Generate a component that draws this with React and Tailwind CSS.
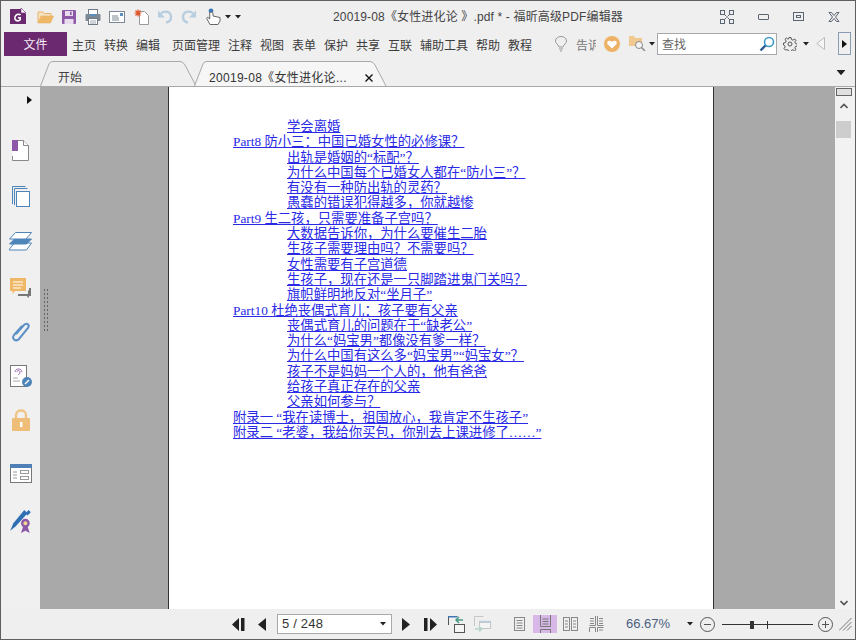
import React from "react";

const FONT = "font-['Liberation_Sans','Noto_Sans_CJK_SC',sans-serif]";

const Caret = ({ className = "" }) => (
  <svg width="6" height="4" viewBox="0 0 6 4" className={className}><path d="M0 0h6L3 3.5z" fill="#222" /></svg>
);

const Logo = () => (
  <svg width="17" height="17" viewBox="0 0 17 17" className="ml-[9px]">
    <path d="M0 1h11l5 5v10H0z" fill="#6b2a70" />
    <path d="M11 0l5 5h-5z" fill="#fff" stroke="#6b2a70" strokeWidth=".6" />
    <path d="M10.5 7.2C9.8 6 7.4 6 6 7.3c-1.5 1.5-1.5 4 0 5 1.3.8 3.2.5 4.2-.5V9.8H8" fill="none" stroke="#fff" strokeWidth="1.6" />
  </svg>
);
const Folder = () => (
  <svg width="17" height="14" viewBox="0 0 17 14" className="ml-[10px]">
    <path d="M1 13V2h5l1.5 1.5H14V6" fill="#f6e2c0" stroke="#e6b268" />
    <path d="M1 13L4 6h12.5L13.5 13z" fill="#efb866" stroke="#e6b268" strokeWidth=".6" />
  </svg>
);
const Save = () => (
  <svg width="14" height="14" viewBox="0 0 14 14" className="ml-[8px]">
    <rect width="14" height="14" rx="1" fill="#8e58a8" />
    <rect x="3" y="1" width="8" height="5" fill="#e9dcef" />
    <rect x="8" y="1.6" width="1.6" height="3.4" fill="#8e58a8" />
    <rect x="2.5" y="9" width="9" height="5" fill="#e9dcef" />
  </svg>
);
const Print = () => (
  <svg width="16" height="16" viewBox="0 0 16 16" className="ml-[9px]">
    <rect x="3.5" y=".5" width="9" height="5" fill="#fff" stroke="#6f7a86" />
    <rect x=".5" y="5" width="15" height="7" rx="1" fill="#7c8894" />
    <rect x="5" y="5" width="6" height="1.5" fill="#4f90c8" />
    <rect x="3.5" y="9.5" width="9" height="6" fill="#fff" stroke="#6f7a86" />
    <path d="M5 12h6M5 14h6" stroke="#a0a8b0" />
  </svg>
);
const Mail = () => (
  <svg width="16" height="12" viewBox="0 0 16 12" className="ml-[8px]">
    <rect x=".5" y=".5" width="15" height="11" fill="#fff" stroke="#7b8794" />
    <path d="M3 5h6M3 7h7M3 9h7" stroke="#7b8794" />
    <rect x="11" y="2" width="3" height="3" fill="#5a90c0" />
  </svg>
);
const StarDoc = () => (
  <svg width="15" height="16" viewBox="0 0 15 16" className="ml-[9px]">
    <path d="M5.5 2.5h5l4 4v9h-9z" fill="#fff" stroke="#9a9a9a" />
    <path d="M4 .5v7M.5 4h7M1.5 1.5l5 5M6.5 1.5l-5 5" stroke="#e0542a" strokeWidth="1.2" />
  </svg>
);
const Undo = ({ flip, className = "" }) => (
  <svg width="16" height="15" viewBox="0 0 16 15" className={flip ? `${className} -scale-x-100` : className}>
    <path d="M4 4.5C7 1.5 14 2 14 8c0 3-2 5-5 5.5" fill="none" stroke="#b7cde0" strokeWidth="2.4" />
    <path d="M1 1.5v7h7z" fill="#b7cde0" />
  </svg>
);
const Hand = () => (
  <svg width="15" height="18" viewBox="0 0 15 18" className="ml-[9px]">
    <circle cx="5" cy="3" r="2.4" fill="#3f78b8" />
    <path d="M3.7 5v6L2 9.5C1 9 .4 10 1 11l3 5.5h8l2-3.5V9.5L7 8V5C7 4 3.7 4 3.7 5z" fill="#fff" stroke="#666" />
  </svg>
);
const Tile = () => (
  <svg width="14" height="14" viewBox="0 0 14 14" fill="none" stroke="#5a6472">
    <rect x=".5" y=".5" width="4" height="4" /><rect x="9.5" y=".5" width="4" height="4" />
    <rect x=".5" y="9.5" width="4" height="4" /><rect x="9.5" y="9.5" width="4" height="4" />
    <path d="M5 5l1.5 1.5M9 5L7.5 6.5M5 9l1.5-1.5M9 9L7.5 7.5" />
  </svg>
);

const menus = [
  ["主页", "w-[24px]"], ["转换", "w-[24px]"], ["编辑", "w-[28px]"], ["页面管理", "w-[48px]"],
  ["注释", "w-[24px]"], ["视图", "w-[24px]"], ["表单", "w-[24px]"], ["保护", "w-[24px]"],
  ["共享", "w-[24px]"], ["互联", "w-[24px]"], ["辅助工具", "w-[48px]"], ["帮助", "w-[24px]"], ["教程", "w-[24px]"],
];

const TabShape = ({ width, fill }) => (
  <svg width={width} height="25" viewBox={`0 0 ${width} 25`} className="absolute left-0 top-0" fill="none">
    <path d={`M.5 25L9 3Q10 .5 13 .5H${width - 17}Q${width - 14} .5 ${width - 12} 4L${width - 1} 25`} fill={fill} stroke="#a8a8a8" />
  </svg>
);

const lines = [
  [1, "学会离婚"],
  [0, "Part8 防小三：中国已婚女性的必修课？"],
  [1, "出轨是婚姻的“标配”？"],
  [1, "为什么中国每个已婚女人都在“防小三”？"],
  [1, "有没有一种防出轨的灵药？"],
  [1, "愚蠢的错误犯得越多，你就越惨"],
  [0, "Part9 生二孩，只需要准备子宫吗？"],
  [1, "大数据告诉你，为什么要催生二胎"],
  [1, "生孩子需要理由吗？不需要吗？"],
  [1, "女性需要有子宫道德"],
  [1, "生孩子，现在还是一只脚踏进鬼门关吗？"],
  [1, "旗帜鲜明地反对“坐月子”"],
  [0, "Part10 杜绝丧偶式育儿：孩子要有父亲"],
  [1, "丧偶式育儿的问题在于“缺老公”"],
  [1, "为什么“妈宝男”都像没有爹一样？"],
  [1, "为什么中国有这么多“妈宝男”“妈宝女”？"],
  [1, "孩子不是妈妈一个人的，他有爸爸"],
  [1, "给孩子真正存在的父亲"],
  [1, "父亲如何参与？"],
  [0, "附录一 “我在读博士，祖国放心，我肯定不生孩子”"],
  [0, "附录二 “老婆，我给你买包，你别去上课进修了……”"],
];

const side = [
  ["mt-[53px]", <svg key="a" width="17" height="21" viewBox="0 0 17 21"><path d="M.5 8V.5h11l5 5v15H.5V16" fill="#fff" stroke="#888" /><path d="M11.5.5v5h5" fill="#fff" stroke="#888" /><path d="M0 0h6v11H0z" fill="#8e58a8" /></svg>],
  ["mt-[25px]", <svg key="b" width="18" height="21" viewBox="0 0 18 21" fill="none" stroke="#4f84b8"><path d="M.5 18V.5h13M2.5 19V2.5h13" /><rect x="4.5" y="5.5" width="13" height="15" fill="#fff" /></svg>],
  ["mt-[25px]", <svg key="c" width="23" height="19" viewBox="0 0 23 19" stroke="#4f84b8"><path d="M.5 17l5-6h17l-5 7h-17z" fill="#fff" /><path d="M.5 12l5-5h17l-5 5z" fill="#4f84b8" /><path d="M.5 7l6-6.5h16L17 7z" fill="#fff" /></svg>],
  ["mt-[27px]", <svg key="d" width="22" height="21" viewBox="0 0 22 21"><path d="M0 0h16v13H5l-2.5 3v-3H0z" fill="#efb866" /><path d="M3 4h10M3 7h10M3 10h8" stroke="#fff" /><path d="M8 16h10v-4l1 1v6l-1 1-1-2H8z" fill="#777" /><path d="M20 10v8" stroke="#777" strokeWidth="2" /></svg>],
  ["mt-[22px]", <svg key="e" width="20" height="22" viewBox="0 0 20 22" fill="none" stroke="#5b90c6" strokeWidth="2"><path d="M5 13l8-9c3-3 6 0 4 3L8 18c-3 3-8 0-5-4l8-9" /></svg>],
  ["mt-[22px]", <svg key="f" width="22" height="22" viewBox="0 0 22 22"><rect x=".5" y=".5" width="16" height="21" fill="#fff" stroke="#777" /><path d="M5 7c0-4 7-4 7 0M7 7c0-2 3-2 3 0s-1 2-2 3" fill="none" stroke="#9b6cb0" /><path d="M3 13h5M3 16h7" stroke="#aaa" /><circle cx="17" cy="17" r="5" fill="#4f84b8" /><path d="M15 19l4-4" stroke="#fff" strokeWidth="1.4" /></svg>],
  ["mt-[22px]", <svg key="g" width="18" height="22" viewBox="0 0 18 22"><path d="M4 10V6c0-6 10-6 10 0v4" fill="none" stroke="#efc587" strokeWidth="2.4" /><rect y="9" width="18" height="13" rx="1" fill="#eebd78" /><rect x="8" y="13" width="2.4" height="5" fill="#fff" /></svg>],
  ["mt-[33px]", <svg key="h" width="22" height="19" viewBox="0 0 22 19" fill="none"><rect x=".5" y=".5" width="21" height="18" fill="#fff" stroke="#777" /><rect width="22" height="4" fill="#4f7fb5" /><path d="M3 8h4M3 11h4M3 14h4" stroke="#999" /><rect x="10.5" y="6.5" width="8" height="3" stroke="#999" /><rect x="10.5" y="12.5" width="8" height="3" stroke="#999" /></svg>],
  ["mt-[26px]", <svg key="i" width="22" height="24" viewBox="0 0 20 22"><path d="M0 20l3-7L13 1l3 3L5 16z" fill="#2f70b4" /><path d="M17 1l2 2-3 3-2-2z" fill="#2f70b4" /><circle cx="14" cy="13" r="4" fill="#8e58a8" /><circle cx="14" cy="13" r="1.8" fill="#f0d890" /><path d="M10 22l2-6h4l2 6-4-2z" fill="#8e58a8" /></svg>],
];

export default function App() {
  return (
    <div className={`${FONT} w-[856px] h-[640px] box-border border border-[#5f5f5f] bg-[#efefef] flex flex-col overflow-hidden text-[12px] text-[#444]`}>
      {/* title bar */}
      <div className="h-[30px] shrink-0 flex items-center pt-[1px]">
        <Logo /><Folder /><Save /><Print /><Mail /><StarDoc />
        <Undo className="ml-[8px]" /><Undo flip className="ml-[8px]" />
        <Hand />
        <Caret className="ml-[4px]" />
        <Caret className="ml-[4px]" />
        <span className="ml-[92px] whitespace-nowrap w-[294px] tracking-[0.15px]">20019-08《女性进化论 》.pdf * - 福昕高级PDF编辑器</span>
        <div className="ml-[93px] flex items-center">
          <Tile />
          <div className="ml-[24px] w-[11px] h-[6px] border border-[#5a6472] rounded-[1px]" />
          <div className="ml-[24px] w-[11px] h-[9px] border border-[#5a6472] flex items-center justify-center"><div className="w-[5px] h-[3px] border border-[#5a6472]" /></div>
          <svg width="12" height="10" viewBox="0 0 12 10" className="ml-[24px]" fill="none" stroke="#5a6472"><path d="M1 .5h2.5L6 3.5 8.500.5H11L7.500 5 11 9.500H8.500L6 6.500 3.500 9.500H1L4.500 5z" /></svg>
        </div>
      </div>
      {/* menu bar */}
      <div className="h-[25px] shrink-0 flex items-center">
        <div className="ml-[3px] w-[63px] h-[24px] bg-[#6b2a70] text-[#f4ecf6] flex items-center justify-center text-[12px] pt-[3px]">文件</div>
        <div className="ml-[5px] flex gap-x-[8px] pt-[5px] text-[12px] text-[#3c3c3c]">
          {menus.map(([m, w]) => <span key={m} className={`${w} whitespace-nowrap`}>{m}</span>)}
        </div>
        <svg width="12" height="16" viewBox="0 0 12 16" className="ml-[23px]" fill="none" stroke="#999"><path d="M4 11C3 8 .5 7.500.5 5c0-6 11-6 11 0 0 2.500-2.500 3-3.500 6z" /><path d="M4 13h4M5 15h2" /></svg>
        <div className="ml-[9px] w-[20px] overflow-hidden whitespace-nowrap pt-[5px] text-[#777]">告诉我</div>
        <svg width="16" height="16" viewBox="0 0 16 16" className="ml-[8px]"><circle cx="8" cy="8" r="8" fill="#eeb266" /><path d="M8 12.500L3.500 8C2 5.500 6 3.500 8 6c2-2.500 6-.5 4.500 2z" fill="#fff" /></svg>
        <svg width="17" height="15" viewBox="0 0 17 15" className="ml-[9px]" fill="none"><path d="M0 0h5l1 2h7v8H0z" fill="#efc98e" /><circle cx="10" cy="9" r="3.500" fill="#f4f4f4" stroke="#888" /><path d="M12.500 11.500L16 15" stroke="#888" strokeWidth="1.4" /></svg>
        <Caret className="ml-[3px]" />
        <div className="ml-[2px] w-[120px] h-[22px] box-border bg-white border border-[#a9a9a9] flex items-center pl-[4px] pr-[1px] justify-between text-[#666]">
          <span className="pt-[2px]">查找</span>
          <svg width="16" height="16" viewBox="0 0 16 16" fill="none"><circle cx="10" cy="6" r="4.500" fill="#fff" stroke="#3f9ac8" strokeWidth="1.600" /><path d="M6.500 9.500L1.500 14.500" stroke="#2b5d94" strokeWidth="2.400" /></svg>
        </div>
        <svg width="14" height="14" viewBox="0 0 14 14" className="ml-[6px]" fill="none" stroke="#555"><circle cx="7" cy="7" r="2" /><path d="M6 .5h2l.4 2 1.600.7L11.700 2l1.300 1.400-1.200 1.700.7 1.500 1.900.4v2l-1.900.4-.7 1.500 1.200 1.700-1.300 1.300-1.700-1.200-1.600.7-.4 2H6l-.4-2-1.600-.7L2.300 13 1 11.600l1.200-1.700-.7-1.500L.5 8V6l2-.4.7-1.500L2 2.300 3.400 1 5 2.200l.6-.3z" /></svg>
        <Caret className="ml-[6px]" />
        <svg width="9" height="13" viewBox="0 0 9 13" className="ml-[7px]" fill="none"><path d="M8.500 .5v12L.8 6.500z" stroke="#bbb" fill="#f6f6f6" /></svg>
        <div className="ml-[13px] w-[13px] h-[23px] box-border border border-[#8a9db5] flex items-center justify-center"><svg width="5" height="8" viewBox="0 0 5 8"><path d="M0 0l5 4-5 4z" fill="#111" /></svg></div>
      </div>
      {/* tabs */}
      <div className="h-[31px] shrink-0 flex items-end border-b border-[#a9a9a9] relative">
        <div className="relative ml-[39px] w-[157px] h-[25px]">
          <TabShape width={157} fill="#efefef" />
          <span className="absolute left-[18px] top-[8px]">开始</span>
        </div>
        <div className="relative ml-[-3px] w-[193px] h-[25px]">
          <TabShape width={193} fill="#f6f6f6" />
          <span className="absolute left-[15px] top-[8px] whitespace-nowrap text-[#333] tracking-[0.3px]">20019-08《女性进化论...</span>
          <svg width="8" height="8" viewBox="0 0 8 8" className="absolute left-[171px] top-[13px]"><path d="M.5.5l7 7M7.500.5l-7 7" stroke="#111" strokeWidth="1.400" /></svg>
        </div>
        <Caret className="ml-[451px] mb-[11px] scale-150" />
      </div>
      {/* main */}
      <div className="flex-1 min-h-0 flex">
        <div className="w-[39px] shrink-0 bg-[#f0f0f0] flex flex-col items-center relative">
          <svg width="5" height="8" viewBox="0 0 5 8" className="absolute left-[26px] top-[9px]"><path d="M0 0l5 4-5 4z" fill="#111" /></svg>
          {side.map(([m, el], i) => <div key={i} className={`${m} flex justify-center`}>{el}</div>)}
        </div>
        <div className="flex-1 bg-[#a9a9a9] flex relative">
          <div className="absolute left-[3px] top-[201px] w-[6px] h-[44px] bg-[radial-gradient(circle,#666_1px,transparent_1px)] bg-[length:3px_4px]" />
          <div className="ml-[128px] w-[546px] box-border bg-white border-x border-[#333] pt-[32px] pl-[64px] font-['Liberation_Serif','Noto_Sans_CJK_SC',serif] text-[13.33px] leading-[15.3px] text-[#2a2ae6]">
            {lines.map(([ind, t], i) => (
              <div key={i} className={`${ind ? "pl-[54px]" : ""} whitespace-nowrap`}><span className="underline decoration-[#2a2ae6]">{t}</span></div>
            ))}
          </div>
        </div>
        <div className="w-[20px] shrink-0 bg-[#f2f2f2] flex flex-col items-center pr-[3px] box-border">
          <div className="mt-[1px] w-[16px] h-[8px] box-border bg-[#e0e0e0] border border-[#666]" />
          <svg width="8" height="6" viewBox="0 0 8 6" className="mt-[7px]" fill="none" stroke="#555" strokeWidth="1.600"><path d="M.5 5L4 1.500 7.500 5" /></svg>
          <div className="mt-[12px] w-[15px] h-[17px] bg-[#cdcdcd]" />
          <svg width="8" height="6" viewBox="0 0 8 6" className="mt-auto mb-[3px]" fill="none" stroke="#555" strokeWidth="1.600"><path d="M.5 1L4 4.500 7.500 1" /></svg>
        </div>
      </div>
      {/* status bar */}
      <div className="h-[30px] shrink-0 flex items-center">
        <svg width="13" height="13" viewBox="0 0 13 13" className="ml-[231px]"><path d="M7 0v13L0 6.500zM9 0h3.500v13H9z" fill="#222" /></svg>
        <svg width="9" height="13" viewBox="0 0 9 13" className="ml-[13px]"><path d="M8 0v13L0 6.500z" fill="#222" /></svg>
        <div className="ml-[10px] w-[115px] h-[20px] box-border bg-white border border-[#a9a9a9] flex items-center justify-between pl-[3px] pr-[5px] text-[13px] text-[#333]">
          <span className="pl-[1px] tracking-[0.2px]">5 / 248</span><Caret />
        </div>
        <svg width="9" height="13" viewBox="0 0 9 13" className="ml-[9px]"><path d="M1 0v13l8-6.500z" fill="#222" /></svg>
        <svg width="13" height="13" viewBox="0 0 13 13" className="ml-[14px]"><path d="M0 0h3.500v13H0zM6 0v13l7-6.500z" fill="#222" /></svg>
        <svg width="17" height="17" viewBox="0 0 17 17" className="ml-[11px]" fill="none"><path d="M.5 9V.5h9" stroke="#555" /><path d="M0 .5h9" stroke="#3f78b8" strokeWidth="2" /><rect x="6.500" y="8.500" width="10" height="8" stroke="#555" fill="#f4f4f4" /><path d="M15 4H9M11 1L8 4l3 3" stroke="#4a9a88" strokeWidth="1.500" /></svg>
        <svg width="17" height="17" viewBox="0 0 17 17" className="ml-[9px]" fill="none" stroke="#c6c6c6"><path d="M.5 10V.5h9" /><rect x="5.500" y="6.500" width="11" height="6" fill="#f4f4f4" /><path d="M5 5.500h12" stroke="#b8cde0" strokeWidth="1.500" /><path d="M1 13h6M5 10.500l3 2.500-3 2.500" stroke="#b6d4cc" strokeWidth="1.400" /></svg>
        <svg width="11" height="14" viewBox="0 0 11 14" className="ml-[23px]" fill="none" stroke="#888"><rect x=".5" y=".5" width="10" height="13" /><path d="M2.500 3.500h6M2.500 6h6M2.500 8.500h6M2.500 11h6" /></svg>
        <div className="ml-[8px] w-[24px] h-[18px] bg-[#d8b8e6] flex items-center justify-center">
          <svg width="11" height="18" viewBox="0 0 11 18" fill="none" stroke="#777"><path d="M.5 0v11.500h10V0M2.500 4h6M2.500 6.500h6M2.500 9h6M.5 18v-3.500h10V18" /></svg>
        </div>
        <svg width="15" height="14" viewBox="0 0 15 14" className="ml-[6px]" fill="none" stroke="#888"><rect x=".5" y=".5" width="6" height="13" /><rect x="8.500" y=".5" width="6" height="13" /><path d="M2 4h3M2 7h3M2 10h3M10 4h3M10 7h3M10 10h3" /></svg>
        <svg width="15" height="16" viewBox="0 0 15 16" className="ml-[11px]" fill="none" stroke="#888"><path d="M.5 9.500h6V0M8.500 0v9.500h6M1 2.500h4M1 5h4M1 7.500h4M10 2.500h4M10 5h4M10 7.500h4M.5 16v-4.500h6V16M8.500 16v-4.500h6M10 14h4" /></svg>
        <span className="ml-[22px] text-[13px] text-[#4a5f80] w-[46px] whitespace-nowrap">66.67%</span>
        <Caret className="ml-[15px]" />
        <svg width="15" height="15" viewBox="0 0 15 15" className="ml-[7px]" fill="none" stroke="#555"><circle cx="7.500" cy="7.500" r="7" /><path d="M4 7.500h7" /></svg>
        <div className="ml-[7px] w-[91px] h-[9px] relative flex items-center">
          <div className="w-full h-[1px] bg-[#333]" />
          <div className="absolute left-[28px] top-[1px] w-[4px] h-[8px] bg-[#333]" />
          <div className="absolute left-[45px] top-[1px] w-[1px] h-[8px] bg-[#333]" />
        </div>
        <svg width="15" height="15" viewBox="0 0 15 15" className="ml-[5px]" fill="none" stroke="#555"><circle cx="7.500" cy="7.500" r="7" /><path d="M4 7.500h7M7.500 4v7" /></svg>
        <svg width="13" height="13" viewBox="0 0 13 13" className="ml-[6px]" fill="none" stroke="#777"><path d="M0 12.500L12.500 0M4 12.500L12.500 4M8 12.500L12.500 8" /></svg>
      </div>
    </div>
  );
}
